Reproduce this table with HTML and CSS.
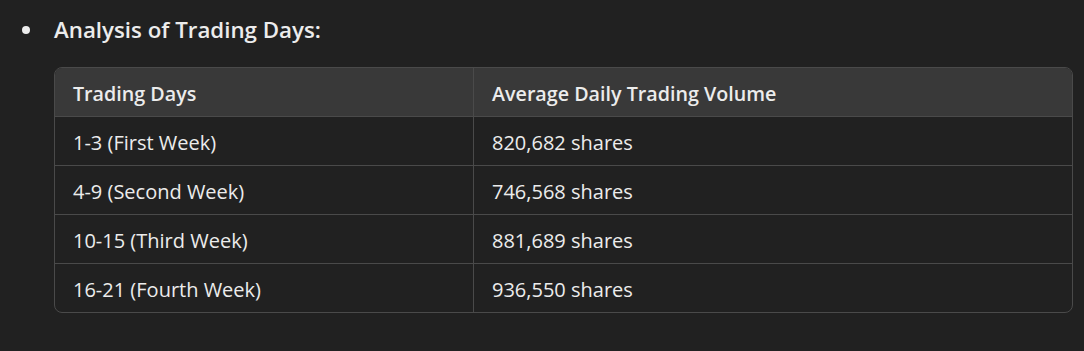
FILE: index.html
```html
<!DOCTYPE html>
<html lang="en">
<head>
<meta charset="utf-8">
<title>Analysis of Trading Days</title>
<link rel="stylesheet" href="styles.css">
</head>
<body>
<ul class="list">
  <li class="item">
    <div class="item-title"><span class="dot"></span><strong>Analysis of Trading Days:</strong></div>
    <div class="table-wrap">
      <table class="data">
        <colgroup><col class="col-a"><col class="col-b"></colgroup>
        <thead>
          <tr><th>Trading Days</th><th>Average Daily Trading Volume</th></tr>
        </thead>
        <tbody>
          <tr><td>1-3 (First Week)</td><td>820,682 shares</td></tr>
          <tr><td>4-9 (Second Week)</td><td>746,568 shares</td></tr>
          <tr><td>10-15 (Third Week)</td><td>881,689 shares</td></tr>
          <tr><td>16-21 (Fourth Week)</td><td>936,550 shares</td></tr>
        </tbody>
      </table>
    </div>
  </li>
</ul>
</body>
</html>
```

FILE: styles.css
```css
html, body {
  margin: 0;
  padding: 0;
  background: #212121;
}
body {
  color: #ececec;
  font-family: "Open Sans", "Noto Sans", "Liberation Sans", sans-serif;
  font-size: 20px;
}
.list {
  list-style: none;
  margin: 0;
  padding: 13px 11px 0 22px;
}
.item-title {
  display: flex;
  align-items: center;
  height: 33px;
  font-size: 22.3px;
}
.item-title strong {
  font-weight: 600;
}
.dot {
  width: 8px;
  height: 8px;
  border-radius: 50%;
  background: #ececec;
  margin-right: 24px;
}
.table-wrap {
  margin: 21px 0 0 32px;
  border: 1px solid #4a4a4a;
  border-radius: 8px;
  overflow: hidden;
}
.data {
  width: 100%;
  border-collapse: separate;
  border-spacing: 0;
  table-layout: fixed;
}
.col-a { width: 419px; }
.data th, .data td {
  text-align: left;
  line-height: 24px;
  padding: 14px 18px 10px;
  border-bottom: 1px solid #4a4a4a;
  vertical-align: top;
}
.data th {
  background: #393939;
  font-weight: 600;
  font-size: 19.7px;
}
.data td {
  font-weight: 400;
}
.data th:first-child, .data td:first-child {
  border-right: 1px solid #4a4a4a;
}
.data tbody tr:last-child td {
  border-bottom: none;
}
```
